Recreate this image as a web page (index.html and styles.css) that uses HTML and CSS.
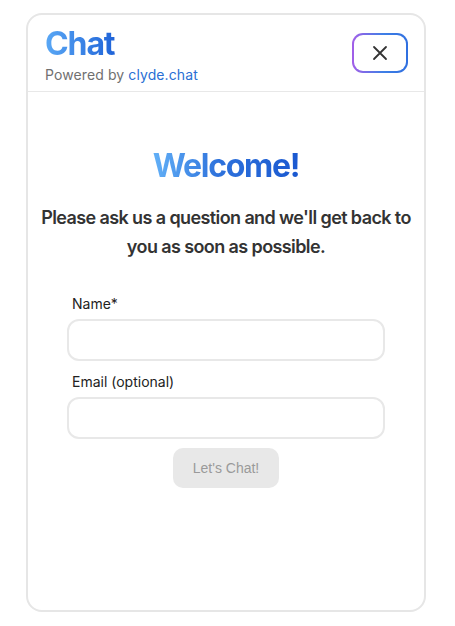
FILE: index.html
```html
<!DOCTYPE html>
<html>
<head>
<meta charset="utf-8">
<link rel="stylesheet" href="styles.css">
</head>
<body>
<div class="card">
  <header class="header">
    <div class="brand">
      <h1 class="title">Chat</h1>
      <div class="powered">Powered by <span class="link">clyde.chat</span></div>
    </div>
    <button class="close" aria-label="Close">
      <svg width="16" height="16" viewBox="0 0 16 16"><path d="M2 2L14 14M14 2L2 14" stroke="#333" stroke-width="1.8" stroke-linecap="round" fill="none"/></svg>
    </button>
  </header>
  <main class="body">
    <h2 class="welcome">Welcome!</h2>
    <p class="intro">Please ask us a question and we'll get back to you as soon as possible.</p>
    <form class="form">
      <label class="label">Name*</label>
      <input class="input" type="text">
      <label class="label">Email (optional)</label>
      <input class="input" type="text">
      <button class="submit" type="button">Let's Chat!</button>
    </form>
  </main>
</div>
</body>
</html>
```

FILE: styles.css
```css
* { box-sizing: border-box; }
html, body { margin: 0; padding: 0; background: #fff; }
body { font-family: Inter, "Noto Sans", sans-serif; }

.card {
  margin: 13px 0 0 26px;
  width: 400px;
  height: 599px;
  border: 2px solid #e6e6e6;
  border-radius: 16px;
  display: flex;
  flex-direction: column;
}

.header {
  display: flex;
  justify-content: space-between;
  align-items: flex-start;
  padding: 10px 16px 0 17px;
  height: 77px;
  border-bottom: 1px solid #e8e8e8;
}

.title {
  margin: 0;
  font-size: 32px;
  font-weight: 700;
  letter-spacing: -1.1px;
  line-height: 38px;
  background: linear-gradient(90deg, #5aa8f5 0%, #1f63d8 100%);
  -webkit-background-clip: text;
  background-clip: text;
  color: transparent;
  display: inline-block;
}

.powered {
  margin-top: 3px;
  font-size: 14px;
  color: #707070;
  line-height: 17px;
  letter-spacing: 0.1px;
}
.link { color: #2a6fd4; }

.close {
  margin-top: 8px;
  width: 56px;
  height: 40px;
  border-radius: 11px;
  border: 2px solid transparent;
  background: linear-gradient(#fff, #fff) padding-box,
              linear-gradient(90deg, #a35ee8 0%, #3f7fe6 55%, #2f6fe0 100%) border-box;
  display: flex;
  align-items: center;
  justify-content: center;
  padding: 0;
}

.body {
  display: flex;
  flex-direction: column;
  align-items: center;
  padding-top: 55px;
}

.welcome {
  margin: 0;
  font-size: 32px;
  font-weight: 700;
  letter-spacing: -1.3px;
  line-height: 38px;
  background: linear-gradient(90deg, #62b0f7 0%, #2e72dc 45%, #1a58d0 100%);
  -webkit-background-clip: text;
  background-clip: text;
  color: transparent;
}

.intro {
  margin: 18px 0 0;
  width: 390px;
  text-align: center;
  font-size: 18px;
  font-weight: 600;
  line-height: 29px;
  letter-spacing: -0.6px;
  color: #333;
}

.form {
  margin-top: 34px;
  width: 318px;
  display: flex;
  flex-direction: column;
  align-items: stretch;
}

.label {
  font-size: 14px;
  color: #222;
  line-height: 17px;
  padding-left: 5px;
  margin-bottom: 7px;
}

.input {
  height: 42px;
  border: 2px solid #e8e8e8;
  border-radius: 12px;
  margin-bottom: 12px;
  background: #fff;
  font-family: inherit;
  outline: none;
}

.submit {
  align-self: center;
  margin-top: -3px;
  width: 106px;
  height: 40px;
  border: none;
  border-radius: 10px;
  background: #e8e8e8;
  color: #9a9a9a;
  font-family: "Liberation Sans", Arial, sans-serif;
  font-size: 14px;
}
```
